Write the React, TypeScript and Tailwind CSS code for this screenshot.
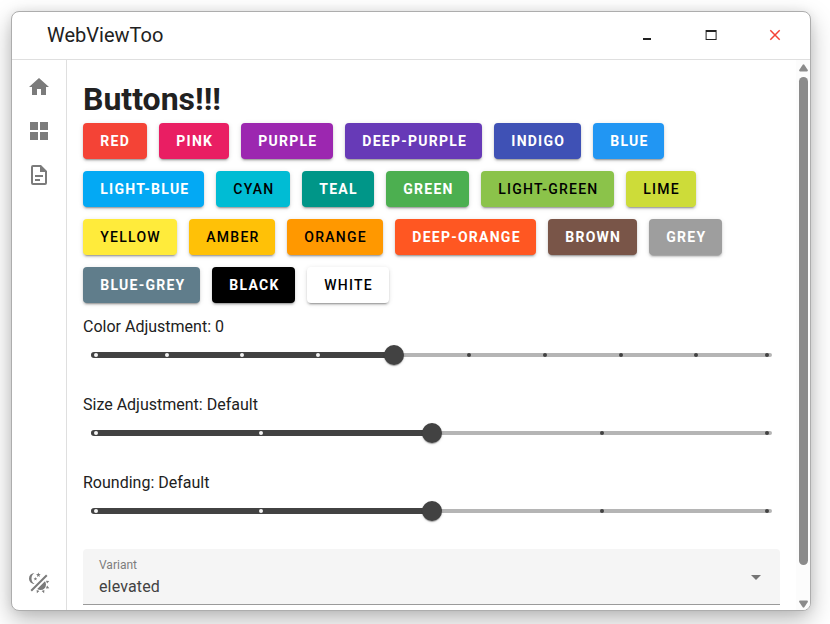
import clsx from "clsx";

const buttonRows: [string, string, boolean][][] = [
  [
    ["red", "bg-[#f44336] w-[64px]", true],
    ["pink", "bg-[#e91e63] w-[70px]", true],
    ["purple", "bg-[#9c27b0] w-[92px]", true],
    ["deep-purple", "bg-[#673ab7] w-[137px]", true],
    ["indigo", "bg-[#3f51b5] w-[87px]", true],
    ["blue", "bg-[#2196f3] w-[71px]", true],
  ],
  [
    ["light-blue", "bg-[#03a9f4] w-[121px]", true],
    ["cyan", "bg-[#00bcd4] w-[74px]", false],
    ["teal", "bg-[#009688] w-[72px]", true],
    ["green", "bg-[#4caf50] w-[83px]", true],
    ["light-green", "bg-[#8bc34a] w-[133px]", false],
    ["lime", "bg-[#cddc39] w-[70px]", false],
  ],
  [
    ["yellow", "bg-[#ffeb3b] w-[94px]", false],
    ["amber", "bg-[#ffc107] w-[86px]", false],
    ["orange", "bg-[#ff9800] w-[96px]", false],
    ["deep-orange", "bg-[#ff5722] w-[141px]", true],
    ["brown", "bg-[#795548] w-[89px]", true],
    ["grey", "bg-[#9e9e9e] w-[73px]", true],
  ],
  [
    ["blue-grey", "bg-[#607d8b] w-[117px]", true],
    ["black", "bg-black w-[83px]", true],
    ["white", "bg-white w-[82px]", false],
  ],
];

const icons = {
  home: "M10,20V14H14V20H19V12H22L12,3L2,12H5V20H10Z",
  grid: "M3,11H11V3H3M3,21H11V13H3M13,21H21V13H13M13,3V11H21V3",
  file: "M6,2A2,2 0 0,0 4,4V20A2,2 0 0,0 6,22H18A2,2 0 0,0 20,20V8L14,2H6M6,4H13V9H18V20H6V4M8,12V14H16V12H8M8,16V18H13V16H8Z",
  theme:
    "M7.5,2C5.71,3.15 4.5,5.18 4.5,7.5C4.5,9.82 5.71,11.85 7.53,13C4.46,13 2,10.54 2,7.5A5.5,5.5 0 0,1 7.5,2M19.07,3.5L20.5,4.93L4.93,20.5L3.5,19.07L19.07,3.5M12.89,5.93L11.41,5L9.97,6L10.39,4.3L9,3.24L10.75,3.12L11.33,1.47L12,3.1L13.73,3.13L12.38,4.26L12.89,5.93M9.59,9.54L8.43,8.81L7.31,9.59L7.65,8.27L6.56,7.44L7.92,7.35L8.37,6.06L8.88,7.33L10.24,7.36L9.19,8.23L9.59,9.54M19,13.5A5.5,5.5 0 0,1 13.5,19C12.28,19 11.15,18.6 10.24,17.93L17.93,10.24C18.6,11.15 19,12.28 19,13.5M14.6,20.08L17.37,18.93L17.13,22.28L14.6,20.08M18.93,17.38L20.08,14.61L22.28,17.15L18.93,17.38M20.08,12.42L18.94,9.64L22.28,9.88L20.08,12.42M9.63,18.93L12.4,20.08L9.87,22.27L9.63,18.93Z",
};

function Icon({ d }: { d: string }) {
  return (
    <svg viewBox="0 0 24 24" className="h-6 w-6 shrink-0 fill-[#7b7b7b]">
      <path d={d} />
    </svg>
  );
}

const TRACK = 681;

function Slider({ label, value, steps }: { label: string; value: number; steps: number }) {
  const at = (i: number) => (i === 0 ? 4.5 : i === steps ? TRACK - 5 : Math.round((i / steps) * TRACK));
  const thumb = Math.round((value / steps) * TRACK);
  return (
    <div className="h-[78px]">
      <div className="h-6 text-[16px] leading-6 text-[#212121]">{label}</div>
      <div className="px-2 pt-1.5">
        <div className="relative flex h-5 items-center">
          <div className="h-1 w-full rounded-full bg-[#b5b5b5]" />
          <div className="absolute top-[7px] left-0 h-1.5 rounded-full bg-[#424242]" style={{ width: thumb }} />
          {Array.from({ length: steps + 1 }, (_, i) => (
            <span
              key={i}
              className={clsx(
                "absolute top-2 -ml-0.5 h-1 w-1 rounded-full",
                i <= value ? "bg-[#f5f5f5]" : "bg-[#424242]",
              )}
              style={{ left: at(i) }}
            />
          ))}
          <span
            className="absolute top-0 -ml-2.5 h-5 w-5 rounded-full bg-[#424242] shadow-[0_2px_1px_-1px_rgba(0,0,0,0.2),0_1px_1px_rgba(0,0,0,0.14),0_1px_3px_rgba(0,0,0,0.12)]"
            style={{ left: thumb }}
          />
        </div>
      </div>
    </div>
  );
}

export default function App() {
  return (
    <div className="h-[624px] w-[830px] overflow-hidden bg-white p-[11px] font-['Roboto',sans-serif]">
      <div className="flex h-[600px] w-[800px] flex-col overflow-hidden rounded-lg border border-[#adadad] bg-white shadow-[0_9px_24px_rgba(0,0,0,0.28),0_0_10px_rgba(0,0,0,0.07)]">
        <header className="flex h-12 shrink-0 items-center border-b border-[#dfdfdf] pb-px pl-[35px]">
          <h1 className="flex-1 text-[20px] leading-8 text-[#212121]">WebViewToo</h1>
          <div className="flex pr-[3px]">
            <div className="flex w-16 justify-center">
              <svg className="h-6 w-6" viewBox="0 0 24 24">
                <path d="M8 15h8v2H8z" fill="#212121" />
              </svg>
            </div>
            <div className="flex w-16 justify-center">
              <svg className="h-6 w-6" viewBox="0 0 24 24">
                <path d="M6.6 7h11v10h-11zM7.6 9v7h9V9z" fill="#212121" fillRule="evenodd" />
              </svg>
            </div>
            <div className="flex w-16 justify-center">
              <svg className="h-6 w-6" viewBox="0 0 24 24">
                <path d="M7.3 7.3l9.4 9.4M16.7 7.3l-9.4 9.4" stroke="#f44336" strokeWidth="1.5" />
              </svg>
            </div>
          </div>
        </header>
        <div className="flex min-h-0 flex-1">
          <nav className="flex w-[55px] shrink-0 flex-col items-center justify-between border-r border-[#dfdfdf] pt-[15px] pb-[15px]">
            <div className="flex flex-col gap-5">
              <Icon d={icons.home} />
              <Icon d={icons.grid} />
              <Icon d={icons.file} />
            </div>
            <Icon d={icons.theme} />
          </nav>
          <main className="min-w-0 flex-1 overflow-hidden px-4 pt-4">
            <h2 className="h-[47px] text-[32px] leading-[47px] font-bold text-[#212121]">Buttons!!!</h2>
            <div className="flex flex-col gap-3">
              {buttonRows.map((row, i) => (
                <div key={i} className="flex gap-3">
                  {row.map(([name, look, light]) => (
                    <button
                      key={name}
                      className={clsx(
                        "h-9 rounded pl-[17.3px] text-left text-[14px] leading-9 tracking-[1.25px] whitespace-nowrap uppercase shadow-[0_3px_1px_-2px_rgba(0,0,0,0.2),0_2px_2px_rgba(0,0,0,0.14),0_1px_5px_rgba(0,0,0,0.12)]",
                        look,
                        light ? "font-bold text-white" : "font-medium text-black",
                      )}
                    >
                      {name}
                    </button>
                  ))}
                </div>
              ))}
            </div>
            <div className="pt-3">
              <Slider label="Color Adjustment: 0" value={4} steps={9} />
              <Slider label="Size Adjustment: Default" value={2} steps={4} />
              <Slider label="Rounding: Default" value={2} steps={4} />
            </div>
            <div className="flex h-14 items-center rounded-t border-b border-[#9a9a9a] bg-[#f5f5f5] px-4">
              <div className="flex-1 pt-[3px]">
                <div className="text-[12px] leading-4 text-[#7d7d7d]">Variant</div>
                <div className="pt-0.5 text-[16px] leading-6 tracking-[0.14px] text-[#424242]">elevated</div>
              </div>
              <svg viewBox="0 0 24 24" className="-mr-1 h-6 w-6 fill-[#757575]">
                <path d="M7,10L12,15L17,10H7Z" />
              </svg>
            </div>
          </main>
          <div className="flex w-[14px] shrink-0 flex-col items-center bg-[#fcfcfc] pt-1 pb-[2px] pl-px">
            <svg className="h-[8px] w-[9px] shrink-0 fill-[#8b8b8b]" viewBox="0 0 9 8">
              <path d="M3.7 .7Q4.5 0 5.3 .7L8.8 6Q9.2 7.4 8 7.4H1Q-.2 7.4 .2 6Z" />
            </svg>
            <div className="mt-[5px] h-[488px] w-[9px] rounded-full bg-[#8b8b8b]" />
            <div className="flex-1" />
            <svg className="h-[8px] w-[9px] shrink-0 fill-[#8b8b8b]" viewBox="0 0 9 8">
              <path d="M3.7 7.3Q4.5 8 5.3 7.3L8.8 2Q9.2 .6 8 .6H1Q-.2 .6 .2 2Z" />
            </svg>
          </div>
        </div>
      </div>
    </div>
  );
}
